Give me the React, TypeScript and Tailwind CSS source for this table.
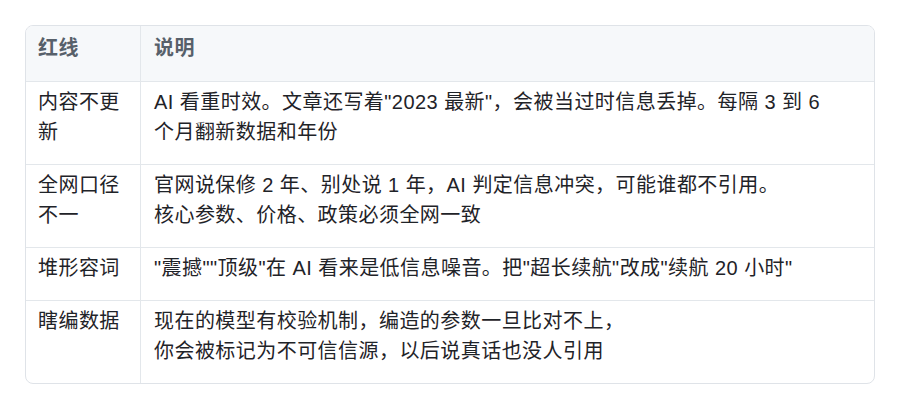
import React from 'react';

const rows = [
  {
    label: ['内容不更', '新'],
    lines: ['AI 看重时效。文章还写着"2023 最新"，会被当过时信息丢掉。每隔 3 到 6', '个月翻新数据和年份'],
  },
  {
    label: ['全网口径', '不一'],
    lines: ['官网说保修 2 年、别处说 1 年，AI 判定信息冲突，可能谁都不引用。', '核心参数、价格、政策必须全网一致'],
  },
  {
    label: ['堆形容词'],
    lines: ['"震撼""顶级"在 AI 看来是低信息噪音。把"超长续航"改成"续航 20 小时"'],
  },
  {
    label: ['瞎编数据'],
    lines: ['现在的模型有校验机制，编造的参数一旦比对不上，', '你会被标记为不可信信源，以后说真话也没人引用'],
  },
];

const font = { fontFamily: '"Liberation Sans", "Noto Sans CJK SC", sans-serif' };

const Multi = ({ lines }: { lines: string[] }) => (
  <>
    {lines.map((l, i) => (
      <React.Fragment key={i}>
        {i > 0 && <br />}
        {l}
      </React.Fragment>
    ))}
  </>
);

const App = () => {
  return (
    <div className="w-[900px] h-[409px] bg-white pt-[25px] px-[25px]" style={font}>
      <div className="rounded-lg border border-[#dfe3e8] overflow-hidden text-[20px] leading-[30px] tracking-[0.45px] text-[#1f2328]">
        {/* header */}
        <div className="flex bg-[#f6f8fa]">
          <div className="w-[115px] shrink-0 border-r border-[#e3e7eb] px-3 pt-[7px] pb-[18px] font-bold text-[#57606a]">
            红线
          </div>
          <div className="flex-1 px-[13px] pt-[7px] pb-[18px] font-bold text-[#57606a]">说明</div>
        </div>

        {rows.map((r, i) => (
          <div key={i} className="flex border-t border-[#e3e7eb]">
            <div className="w-[115px] shrink-0 border-r border-[#e3e7eb] px-3 pt-[5px] pb-[17px]">
              <Multi lines={r.label} />
            </div>
            <div className="flex-1 px-[13px] pt-[5px] pb-[17px]">
              <Multi lines={r.lines} />
            </div>
          </div>
        ))}
      </div>
    </div>
  );
};

export default App;
